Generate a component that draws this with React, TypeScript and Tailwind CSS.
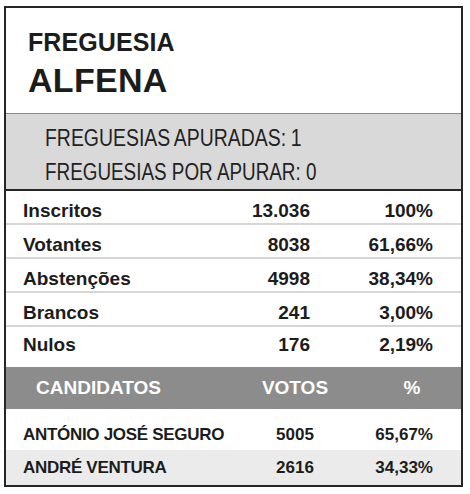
const stats = [
  { label: "Inscritos", value: "13.036", pct: "100%" },
  { label: "Votantes", value: "8038", pct: "61,66%" },
  { label: "Abstenções", value: "4998", pct: "38,34%" },
  { label: "Brancos", value: "241", pct: "3,00%" },
  { label: "Nulos", value: "176", pct: "2,19%" },
];

const candidates = [
  { name: "ANTÓNIO JOSÉ SEGURO", votes: "5005", pct: "65,67%" },
  { name: "ANDRÉ VENTURA", votes: "2616", pct: "34,33%" },
];

export default function App() {
  return (
    <div className="h-[494px] w-[470px] bg-white pt-[6px] font-['Liberation_Sans',Arial,sans-serif] text-[#1c1c1c]">
      <div className="ml-[4px] flex h-[481px] w-[459px] flex-col border-2 border-[#262626]">
        {/* cabeçalho */}
        <div className="h-[106px] border-b border-[#8a8a8a] pl-[22px] pt-[19px] font-bold">
          <div className="text-[25px] leading-[30px] tracking-[0.1px]">FREGUESIA</div>
          <div className="text-[34px] leading-[46px] tracking-[0.3px]">ALFENA</div>
        </div>

        {/* apuramento */}
        <div className="h-[77px] border-b-2 border-[#262626] bg-[#d9d9d9] pl-[39px] pt-[7px] text-[23px] text-[#222]">
          <div className="h-[34px] leading-[34px]">
            <span className="inline-block origin-left scale-x-[0.845] whitespace-nowrap [word-spacing:-1px]">
              FREGUESIAS APURADAS: 1
            </span>
          </div>
          <div className="h-[34px] leading-[34px]">
            <span className="inline-block origin-left scale-x-[0.82] whitespace-nowrap">
              FREGUESIAS POR APURAR: 0
            </span>
          </div>
        </div>

        {/* totais */}
        <div className="flex flex-col text-[19px] font-bold">
          {stats.map((s, i) => {
            const last = i === stats.length - 1;
            return (
              <div
                key={s.label}
                className={
                  last
                    ? "flex h-[40px] items-center pb-[4px] pr-[28px]"
                    : "flex h-[34px] items-center border-b-2 border-[#d6d6d6] pr-[28px] pt-[9px]"
                }
              >
                <span className="flex-1 pl-[17px]">{s.label}</span>
                <span className="w-[100px] text-right">{s.value}</span>
                <span className="w-[123px] text-right">{s.pct}</span>
              </div>
            );
          })}
        </div>

        {/* candidatos */}
        <div className="flex h-[42px] items-center bg-[#8c8c8c] text-[19px] font-bold text-white">
          <span className="flex-1 pl-[30px]">CANDIDATOS</span>
          <span className="w-[100px] text-center">VOTOS</span>
          <span className="ml-[18px] w-[98px] text-center">%</span>
        </div>
        {candidates.map((c, i) => (
          <div
            key={c.name}
            className={
              i === 0
                ? "flex h-[41px] items-center bg-white pr-[28px] pt-[10px] text-[17px] font-bold"
                : "flex h-[35px] items-center bg-[#ebebeb] pr-[28px] text-[17px] font-bold"
            }
          >
            <span className="flex-1 whitespace-nowrap pl-[17px] tracking-[-0.3px]">{c.name}</span>
            <span className="w-[100px] text-center">{c.votes}</span>
            <span className="w-[88px] text-right">{c.pct}</span>
          </div>
        ))}
      </div>
    </div>
  );
}
